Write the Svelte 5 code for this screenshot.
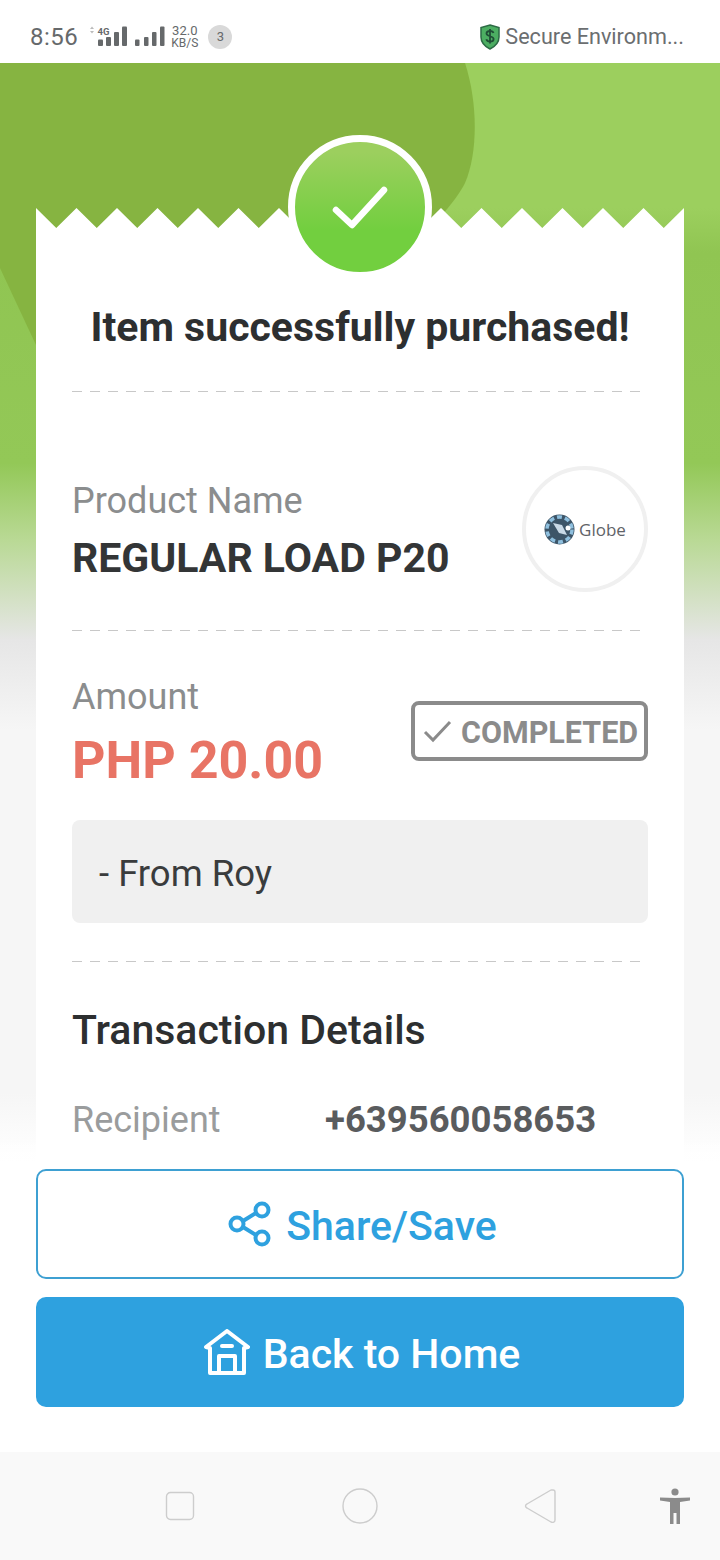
<script>
  const teeth = 16;
  const toothW = 648 / 16;
  let zigzag = `M0 38 L0 0`;
  for (let i = 0; i < teeth; i++) {
    zigzag += ` L${(i + 0.5) * toothW} 20 L${(i + 1) * toothW} 0`;
  }
  zigzag += ` L648 38 Z`;
</script>

<div class="page">
  <header class="status">
    <div class="status-left">
      <span class="time">8:56</span>
      <svg class="signal" width="78" height="24" viewBox="0 0 78 24" fill="#66696b">
        <path d="M3 4 L5 1.5 L7 4 Z M3 6 L7 6 L5 8.5 Z" fill="#bbb" />
        <text x="10.5" y="9.5" font-size="9.5" font-weight="700" font-family="Roboto, sans-serif">4G</text>
        <rect x="11" y="14.5" width="5" height="6.5" rx="1" />
        <rect x="19" y="12" width="5" height="9" rx="1" />
        <rect x="27" y="7" width="5" height="14" rx="1" />
        <rect x="35" y="1.5" width="5" height="19.5" rx="1" />
        <rect x="48" y="14.5" width="4.5" height="6.5" rx="1" />
        <rect x="57" y="12" width="4.5" height="9" rx="1" />
        <rect x="65" y="7" width="4.5" height="14" rx="1" />
        <rect x="73" y="1.5" width="4.5" height="19.5" rx="1" />
      </svg>
      <div class="speed">
        <span>32.0</span>
        <span>KB/S</span>
      </div>
      <span class="count">3</span>
    </div>
    <div class="status-right">
      <svg width="22" height="26" viewBox="0 0 22 26">
        <path d="M11 1 L20 3.5 V13 C20 19 15 23 11 25 C7 23 2 19 2 13 V3.5 Z" fill="#4cae62" stroke="#2d6b45" stroke-width="1.5" />
        <path d="M14.5 9 C14 7.5 12.5 7 11 7 C9 7 7.5 8 7.5 9.6 C7.5 13 14.6 11.5 14.6 15 C14.6 16.7 13 17.6 11 17.6 C9.2 17.6 7.8 16.8 7.3 15.3 M11 5 V19.5" fill="none" stroke="#1f4d35" stroke-width="1.8" />
      </svg>
      <span>Secure Environm...</span>
    </div>
  </header>

  <main class="content">
    <div class="hero">
      <svg class="blob" width="720" height="400" viewBox="0 0 720 400">
        <path d="M0 0 H465 C478 40 478 90 465 120 C450 150 400 200 300 260 C200 320 80 330 36 282 L0 205 Z" fill="#86b441" />
      </svg>
    </div>

    <section class="card">
      <svg class="zigzag" width="648" height="38" viewBox="0 0 648 38">
        <path d={zigzag} fill="#fff" />
      </svg>
      <div class="badge">
        <svg width="56" height="44" viewBox="0 0 56 44">
          <path d="M4 24 L20 39 L52 4" fill="none" stroke="#fff" stroke-width="6.5" stroke-linecap="round" stroke-linejoin="round" />
        </svg>
      </div>

      <div class="card-body">
        <h1>Item successfully purchased!</h1>
        <div class="dash"></div>

        <div class="product">
          <div>
            <div class="label">Product Name</div>
            <div class="product-name">REGULAR LOAD P20</div>
          </div>
          <div class="logo">
            <svg width="31" height="31" viewBox="0 0 31 31">
              <circle cx="15.5" cy="15.5" r="15" fill="#3d5568" />
              <circle cx="15.5" cy="15.5" r="12.5" fill="none" stroke="#8fc0df" stroke-width="3.5" stroke-dasharray="5 3" />
              <path d="M9 9 L18 11 L23 21 L15 19 Z" fill="#c9d9e6" />
              <circle cx="24" cy="14" r="2.5" fill="#fff" />
            </svg>
            <span>Globe</span>
          </div>
        </div>
        <div class="dash"></div>

        <div class="amount-row">
          <div>
            <div class="label">Amount</div>
            <div class="amount">PHP 20.00</div>
          </div>
          <div class="completed">
            <svg width="30" height="24" viewBox="0 0 30 24">
              <path d="M2 13 L10 21 L27 3" fill="none" stroke="#8b8b8b" stroke-width="3" />
            </svg>
            <span>COMPLETED</span>
          </div>
        </div>

        <div class="note">- From Roy</div>
        <div class="dash"></div>

        <h2>Transaction Details</h2>
        <div class="detail">
          <span class="detail-label">Recipient</span>
          <span class="detail-value">+639560058653</span>
        </div>
      </div>
    </section>

    <div class="actions">
      <button class="btn outline">
        <svg width="46" height="46" viewBox="0 0 46 46" fill="none" stroke="#2ea1df" stroke-width="4">
          <circle cx="35" cy="9" r="6.5" />
          <circle cx="10" cy="23" r="6.5" />
          <circle cx="35" cy="37" r="6.5" />
          <path d="M16 20 L29 12 M16 26 L29 34" />
        </svg>
        <span>Share/Save</span>
      </button>
      <button class="btn solid">
        <svg width="46" height="46" viewBox="0 0 46 46" fill="none" stroke="#fff" stroke-width="4" stroke-linejoin="round">
          <path d="M2 18 L23 2 L44 18 L40 19 V44 H6 V19 Z" />
          <path d="M18 17 H28" stroke-linecap="round" />
          <path d="M15 44 V27 H31 V44" />
        </svg>
        <span>Back to Home</span>
      </button>
    </div>
  </main>

  <nav class="navbar">
    <svg class="nav-icon square" width="30" height="30" viewBox="0 0 30 30" fill="none" stroke="#cdcdcd" stroke-width="1.4">
      <rect x="1.5" y="1.5" width="27" height="27" rx="4" />
    </svg>
    <svg class="nav-icon circle" width="36" height="36" viewBox="0 0 36 36" fill="none" stroke="#cdcdcd" stroke-width="1.4">
      <circle cx="18" cy="18" r="17" />
    </svg>
    <svg class="nav-icon back" width="32" height="36" viewBox="0 0 32 36" fill="none" stroke="#cdcdcd" stroke-width="1.4" stroke-linejoin="round">
      <path d="M29 2 C30 2 31 3 31 4 V32 C31 34 29 35 27 34 L3 20 C1 19 1 17 3 16 L27 2 Z" />
    </svg>
    <svg class="nav-icon person" width="32" height="36" viewBox="0 0 32 36" fill="#8b8b8b">
      <circle cx="16" cy="4" r="3.6" />
      <path d="M1 9.5 L16 10 L31 9.5 L31 12.5 L21 14 V36 H17.5 V25 H14.5 V36 H11 V14 L1 12.5 Z" />
    </svg>
  </nav>
</div>

<style>
  :global(body) {
    margin: 0;
    background: #fff;
  }
  .page {
    width: 720px;
    height: 1560px;
    display: flex;
    flex-direction: column;
    font-family: Roboto, "Liberation Sans", sans-serif;
    overflow: hidden;
  }
  .status {
    height: 63px;
    flex-shrink: 0;
    display: flex;
    align-items: center;
    justify-content: space-between;
    padding: 10px 36px 0 30px;
    box-sizing: border-box;
    background: #fff;
    color: #66696b;
  }
  .status-left {
    display: flex;
    align-items: center;
  }
  .time {
    font-size: 24px;
    letter-spacing: 0.5px;
    margin-right: 9px;
  }
  .speed {
    display: flex;
    flex-direction: column;
    align-items: center;
    width: 27px;
    margin-left: 6px;
    font-size: 13px;
    line-height: 12px;
  }
  .speed span:last-child {
    font-size: 12px;
  }
  .count {
    width: 24px;
    height: 24px;
    margin-left: 10px;
    border-radius: 50%;
    background: #d9d9d9;
    display: flex;
    align-items: center;
    justify-content: center;
    font-size: 13px;
  }
  .status-right {
    display: flex;
    align-items: center;
    gap: 4px;
    font-size: 21.6px;
    color: #6b6e70;
  }
  .content {
    flex: 1;
    position: relative;
    display: flex;
    flex-direction: column;
    align-items: center;
    background: #fff;
    overflow: hidden;
  }
  .hero {
    position: absolute;
    top: 0;
    left: 0;
    right: 0;
    height: 1110px;
    background: linear-gradient(
      to bottom,
      #9ccf5e 0,
      #9ccf5e 145px,
      #90c552 190px,
      #93c857 400px,
      #b9d995 477px,
      #e6e6e6 577px,
      #f6f6f6 667px,
      #f6f6f6 1030px,
      #fff 1100px
    );
  }
  .blob {
    position: absolute;
    top: 0;
    left: 0;
  }
  .card {
    position: relative;
    width: 648px;
    margin-top: 145px;
    flex-shrink: 0;
  }
  .zigzag {
    display: block;
  }
  .badge {
    position: absolute;
    top: -73px;
    left: 252px;
    width: 130px;
    height: 130px;
    border: 7px solid #fff;
    border-radius: 50%;
    background: linear-gradient(to bottom, #9ccf5e 8%, #72cf3f 68%);
    display: flex;
    align-items: center;
    justify-content: center;
  }
  .badge svg {
    margin-top: 2px;
  }
  .card-body {
    background: #fff;
    padding: 58px 36px 240px;
    margin-top: -1px;
    color: #2d2f30;
  }
  h1 {
    margin: 0 0 40px;
    font-size: 41px;
    line-height: 48px;
    font-weight: 700;
    text-align: center;
    white-space: nowrap;
  }
  .dash {
    height: 1px;
    margin-right: 8px;
    background: repeating-linear-gradient(to right, #c8c8c8 0, #c8c8c8 10px, transparent 10px, transparent 18px);
  }
  .product {
    display: flex;
    align-items: center;
    justify-content: space-between;
    padding: 74px 0 38px;
    height: 126px;
  }
  .product > div:first-child {
    padding-top: 4px;
  }
  .label {
    font-size: 36px;
    line-height: 40px;
    color: #8b8d8e;
  }
  .product-name {
    font-size: 41px;
    line-height: 48px;
    font-weight: 700;
    margin-top: 13px;
    color: #333536;
  }
  .logo {
    width: 126px;
    height: 126px;
    box-sizing: border-box;
    border: 4px solid #f0f0f0;
    border-radius: 50%;
    display: flex;
    align-items: center;
    justify-content: center;
    gap: 4px;
    font-size: 17px;
    color: #5f6368;
    font-family: "Open Sans", sans-serif;
  }
  .amount-row {
    display: flex;
    justify-content: space-between;
    padding-top: 46px;
    height: 143px;
  }
  .amount {
    font-size: 52px;
    line-height: 62px;
    font-weight: 700;
    color: #e87465;
    margin-top: 13px;
  }
  .completed {
    margin-top: 24px;
    height: 60px;
    width: 237px;
    box-sizing: border-box;
    border: 4px solid #8b8b8b;
    border-radius: 8px;
    display: flex;
    align-items: center;
    gap: 8px;
    padding: 2px 0 0 8px;
    font-size: 30.5px;
    font-weight: 700;
    color: #8b8b8b;
    white-space: nowrap;
  }
  .completed svg {
    margin-top: -2px;
  }
  .note {
    height: 103px;
    box-sizing: border-box;
    display: flex;
    align-items: center;
    padding: 3px 0 0 27px;
    margin-bottom: 38px;
    background: #f0f0f0;
    border-radius: 8px;
    font-size: 36.5px;
    color: #3a3c3d;
  }
  h2 {
    margin: 44px 0 0;
    font-size: 41px;
    line-height: 48px;
    font-weight: 500;
    color: #2d2f30;
  }
  .detail {
    display: flex;
    align-items: center;
    margin-top: 44px;
    font-size: 36px;
  }
  .detail-label {
    width: 253px;
    color: #9a9c9d;
  }
  .detail-value {
    font-size: 36.5px;
    font-weight: 700;
    color: #5a5c5e;
  }
  .actions {
    position: absolute;
    left: 0;
    right: 0;
    bottom: 0;
    height: 315px;
    box-sizing: border-box;
    padding: 32px 36px 45px;
    display: flex;
    flex-direction: column;
    gap: 18px;
    background: linear-gradient(to bottom, rgba(255, 255, 255, 0), #fff 30px);
  }
  .btn {
    height: 110px;
    border-radius: 10px;
    display: flex;
    align-items: center;
    justify-content: center;
    gap: 13px;
    padding-left: 10px;
    font-family: inherit;
    font-size: 41px;
    font-weight: 500;
  }
  .btn span {
    margin-top: 4px;
  }
  .outline {
    background: #fff;
    border: 2px solid #3ea0d2;
    color: #2ea1df;
  }
  .solid {
    background: #2ea1df;
    border: 0;
    color: #fff;
  }
  .navbar {
    height: 108px;
    flex-shrink: 0;
    background: #f9f9f9;
    display: flex;
    align-items: center;
    padding: 0 29px 0 165px;
  }
  .nav-icon {
    flex-shrink: 0;
  }
  .circle {
    margin-left: 147px;
  }
  .back {
    margin-left: 146px;
  }
  .person {
    margin-left: 103px;
  }
</style>
